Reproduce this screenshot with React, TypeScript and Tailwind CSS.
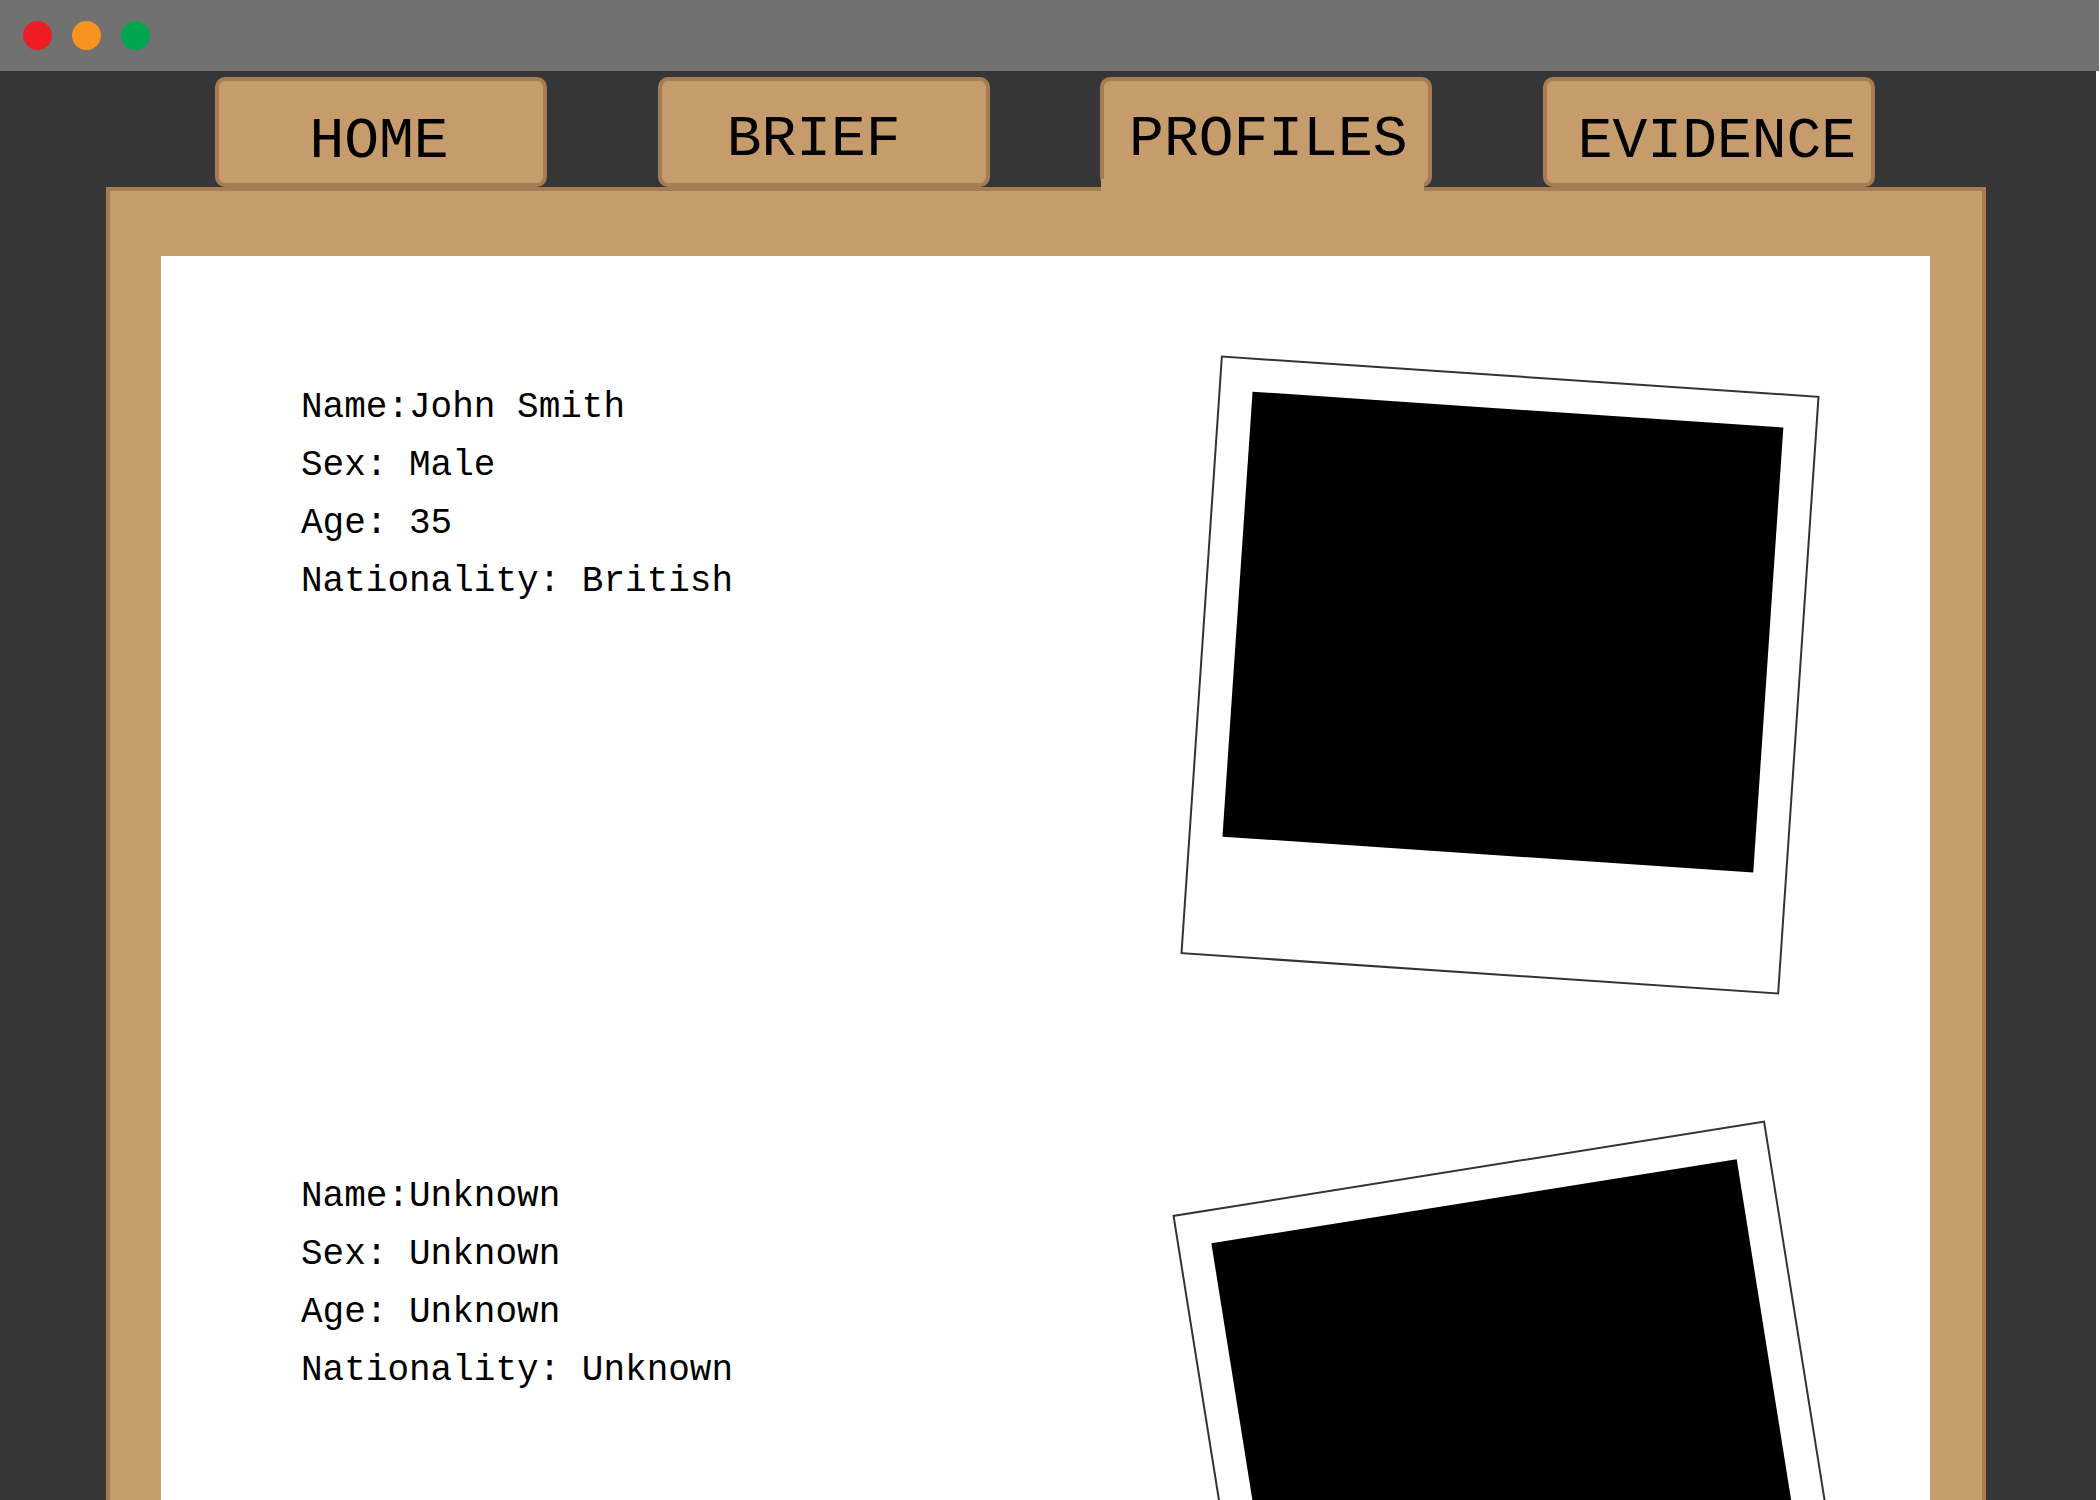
import React from "react";

const TABS = [
  { label: "HOME", current: false, inset: "pt-5 pr-1" },
  { label: "BRIEF", current: false, inset: "pt-4 pr-5" },
  { label: "PROFILES", current: true, inset: "pt-4 pl-1" },
  { label: "EVIDENCE", current: false, inset: "pt-5 pl-4" },
];

const PROFILES = [
  {
    fields: ["Name:John Smith", "Sex: Male", "Age: 35", "Nationality: British"],
    tilt: "rotate-[3.87deg]",
    inset: "pr-[130px]",
  },
  {
    fields: ["Name:Unknown", "Sex: Unknown", "Age: Unknown", "Nationality: Unknown"],
    tilt: "-rotate-[9.08deg]",
    inset: "pr-[114px]",
  },
];

function TitleBar() {
  return (
    <header className="mr-px flex h-[71px] shrink-0 items-center gap-5 bg-[#717171] px-[23px]">
      <button aria-label="Close" className="size-[29px] rounded-full bg-[#ee1c25]" />
      <button aria-label="Minimise" className="size-[29px] rounded-full bg-[#f8941d]" />
      <button aria-label="Maximise" className="size-[29px] rounded-full bg-[#00a650]" />
    </header>
  );
}

function Tabs() {
  return (
    <nav className="flex justify-between pr-[111px] pl-[109px]">
      {TABS.map((tab) => (
        <a
          key={tab.label}
          href={`#${tab.label.toLowerCase()}`}
          aria-current={tab.current ? "page" : undefined}
          className={`relative flex h-[110px] w-[332px] items-center justify-center rounded-[10px] border-4 border-[#a67c52] bg-[#c69c6d] text-[58px] leading-none ${tab.inset}`}
        >
          {tab.label}
          {tab.current && (
            <span className="absolute -bottom-2 -left-[3px] h-3 w-[323px] bg-[#c69c6d]" />
          )}
        </a>
      ))}
    </nav>
  );
}

function Polaroid({ tilt }: { tilt: string }) {
  return (
    <figure className={`size-[600px] shrink-0 border-2 border-[#333333] bg-white p-8 ${tilt}`}>
      <div className="h-[446px] bg-black" />
    </figure>
  );
}

export default function App() {
  return (
    <div
      className="flex h-screen flex-col overflow-hidden bg-white text-black"
      style={{ fontFamily: '"Liberation Mono", monospace' }}
    >
      <TitleBar />
      <div className="mr-1 flex grow flex-col bg-[#363636] pt-1.5 pr-[110px] pl-[106px]">
        <Tabs />
        <main className="grow border-x-4 border-t-4 border-[#a67c52] bg-[#c69c6d] pt-[65px] pr-[52px] pl-[51px]">
          <div className="h-full bg-white pt-[119px] pl-[140px]">
            {PROFILES.map((profile) => (
              <section
                key={profile.fields[0]}
                className={`flex h-[789px] items-start justify-between ${profile.inset}`}
              >
                <ul className="pt-1 text-4xl leading-[58px]">
                  {profile.fields.map((field) => (
                    <li key={field}>{field}</li>
                  ))}
                </ul>
                <Polaroid tilt={profile.tilt} />
              </section>
            ))}
          </div>
        </main>
      </div>
    </div>
  );
}
